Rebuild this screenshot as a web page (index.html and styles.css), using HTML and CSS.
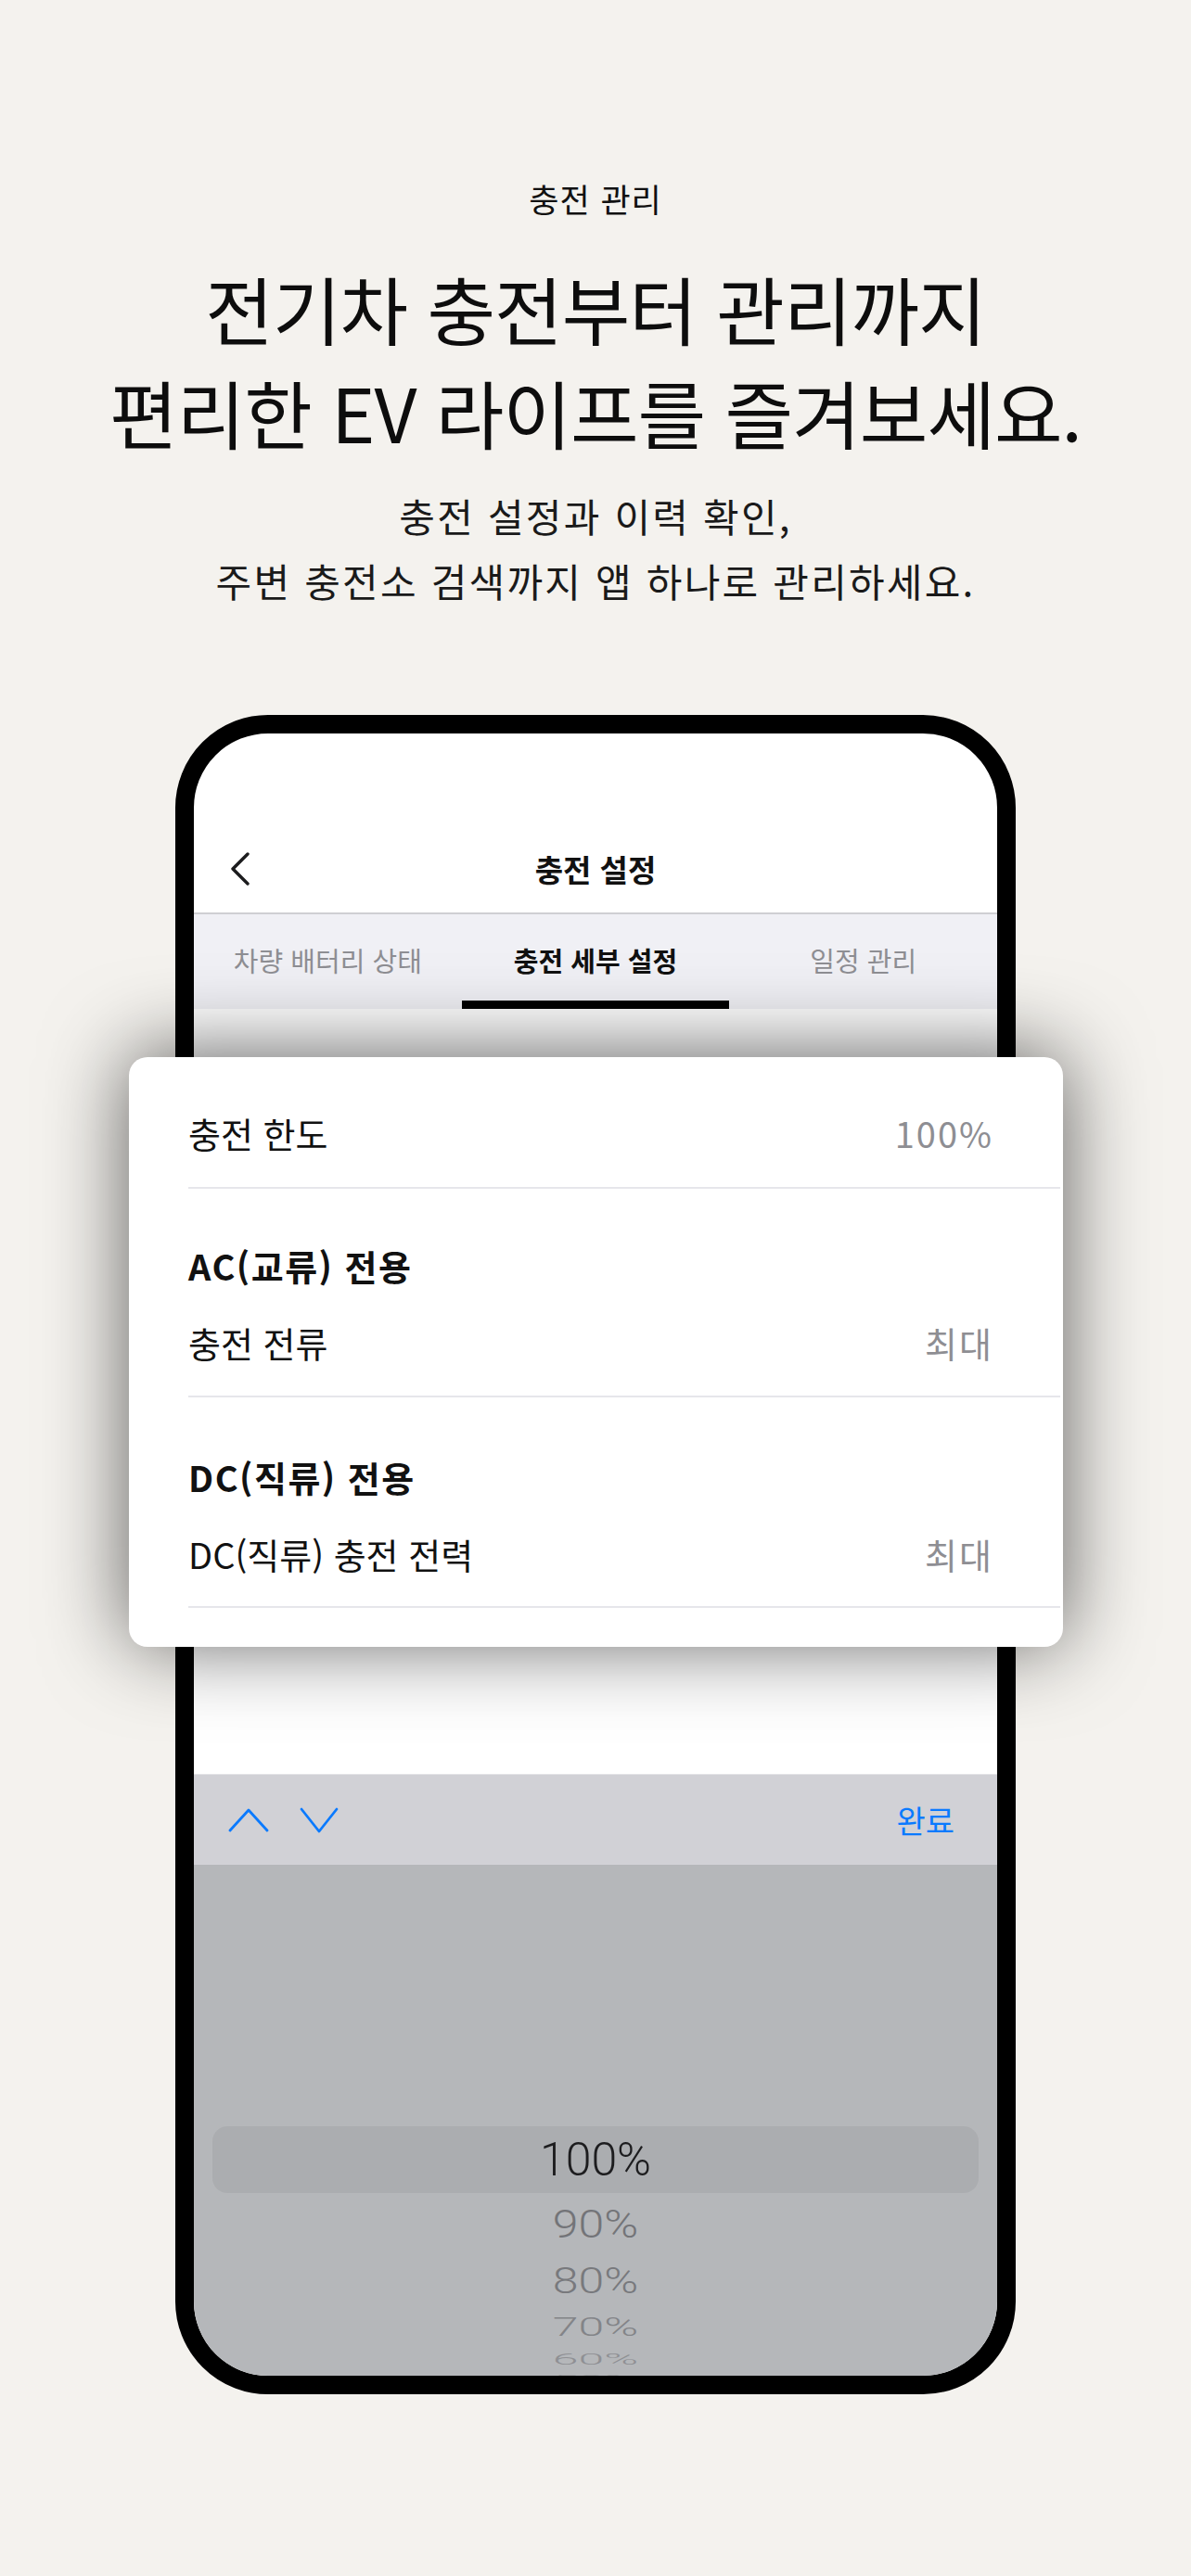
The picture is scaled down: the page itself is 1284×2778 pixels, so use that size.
FILE: index.html
```html
<!DOCTYPE html>
<html lang="ko">
<head>
<meta charset="utf-8">
<title>충전 관리</title>
<link rel="stylesheet" href="styles.css">
</head>
<body>
<div class="page">
  <header class="intro">
    <p class="eyebrow">충전 관리</p>
    <h1 class="headline">전기차 충전부터 관리까지<br>편리한 EV 라이프를 즐겨보세요.</h1>
    <p class="lead">충전 설정과 이력 확인,<br>주변 충전소 검색까지 앱 하나로 관리하세요.</p>
  </header>

  <div class="device-wrap">
    <div class="device">
      <div class="status"></div>
      <div class="navbar">
        <svg class="back" width="24" height="36" viewBox="0 0 24 36"><polyline points="20,2 4,18 20,34" fill="none" stroke="#1c1c1e" stroke-width="3.4" stroke-linecap="round" stroke-linejoin="round"/></svg>
        <span class="nav-title">충전 설정</span>
        <span></span>
      </div>
      <div class="tabs">
        <div class="tab">차량 배터리 상태</div>
        <div class="tab tab-active">충전 세부 설정</div>
        <div class="tab">일정 관리</div>
      </div>
      <div class="content"></div>
      <div class="toolbar">
        <svg class="chev" width="44" height="26" viewBox="0 0 44 26"><polyline points="2,24 22,2 42,24" fill="none" stroke="#0a7aff" stroke-width="2.8" stroke-linecap="round" stroke-linejoin="round"/></svg>
        <svg class="chev chev-down" width="42" height="28" viewBox="0 0 42 28"><polyline points="2,2 21,26 40,2" fill="none" stroke="#0a7aff" stroke-width="2.8" stroke-linecap="round" stroke-linejoin="round"/></svg>
        <span class="done">완료</span>
      </div>
      <div class="picker">
        <div class="pick-band"><span class="pick-sel">100%</span></div>
        <div class="pick-row r1"><span>90%</span></div>
        <div class="pick-row r2"><span>80%</span></div>
        <div class="pick-row r3"><span>70%</span></div>
        <div class="pick-row r4"><span>60%</span></div>
        <div class="pick-row r5"><span>50%</span></div>
      </div>
    </div>

    <div class="sheet">
      <section class="group g1">
        <div class="row"><span class="label">충전 한도</span><span class="value">100%</span></div>
      </section>
      <section class="group g2">
        <div class="group-title">AC(교류) 전용</div>
        <div class="row"><span class="label">충전 전류</span><span class="value">최대</span></div>
      </section>
      <section class="group g3">
        <div class="group-title">DC(직류) 전용</div>
        <div class="row"><span class="label">DC(직류) 충전 전력</span><span class="value">최대</span></div>
      </section>
    </div>
  </div>
</div>
</body>
</html>
```

FILE: styles.css
```css
* { box-sizing: border-box; }

html, body {
  margin: 0;
  padding: 0;
}

body {
  background: #f4f2ee;
  font-family: "Noto Sans CJK KR", "Noto Sans", sans-serif;
  color: #111;
}

.page {
  width: 1284px;
  min-height: 2778px;
  overflow: hidden;
}

.intro {
  padding-top: 194px;
  text-align: center;
}

.eyebrow {
  margin: 0;
  font-size: 35px;
  line-height: 40px;
  font-weight: 400;
  letter-spacing: 1px;
  color: #111;
}

.headline {
  margin: 41px 0 0;
  font-size: 80px;
  line-height: 112px;
  font-weight: 400;
  letter-spacing: -1px;
  color: #0d0d0d;
}

.lead {
  margin: 22px 0 0;
  font-size: 42px;
  line-height: 70px;
  font-weight: 400;
  letter-spacing: 2.2px;
  color: #1a1a1a;
}

/* device */
.device-wrap {
  position: relative;
  width: 906px;
  margin: 110px auto 0;
}

.device {
  width: 906px;
  height: 1811px;
  border: 20px solid #000;
  border-radius: 100px;
  overflow: hidden;
  background: #fff;
  display: flex;
  flex-direction: column;
}

.status {
  height: 98px;
  flex: none;
}

.navbar {
  height: 97px;
  flex: none;
  border-bottom: 2px solid #cfcfd3;
  display: grid;
  grid-template-columns: 1fr auto 1fr;
  align-items: center;
}

.back {
  margin-left: 38px;
}

.nav-title {
  font-size: 33px;
  font-weight: 700;
  letter-spacing: 0;
  color: #111;
}

.tabs {
  height: 102px;
  flex: none;
  background: #f0f0f5;
  display: grid;
  grid-template-columns: repeat(3, 1fr);
}

.tab {
  display: flex;
  align-items: center;
  justify-content: center;
  padding-top: 5px;
  border-bottom: 9px solid transparent;
  font-size: 29px;
  letter-spacing: 0;
  color: #8e8e93;
}

.tab-active {
  color: #111;
  font-weight: 700;
  border-bottom-color: #000;
}

.content {
  height: 825px;
  flex: none;
  background: #fff;
}

.toolbar {
  height: 98px;
  flex: none;
  background: #d1d1d6;
  border-top: 1px solid #e2e2e6;
  display: flex;
  align-items: center;
  padding: 0 46px 0 37px;
}

.chev-down {
  margin-left: 33px;
}

.done {
  margin-left: auto;
  font-size: 34px;
  color: #0a7aff;
  letter-spacing: 0;
}

.picker {
  flex: 1;
  background: #b5b7ba;
  padding-top: 282px;
  font-family: Roboto, "Liberation Sans", sans-serif;
  font-size: 50px;
  font-weight: 300;
  text-align: center;
}

.pick-band {
  height: 72px;
  margin: 0 20px;
  border-radius: 16px;
  background: rgba(0, 0, 0, 0.05);
  display: flex;
  align-items: center;
  justify-content: center;
}

.pick-sel {
  color: #1d1d1f;
  font-weight: 300;
}

.pick-row {
  display: flex;
  align-items: center;
  justify-content: center;
  overflow: visible;
}

.pick-row span {
  display: inline-block;
  line-height: 1;
}

.r1 { height: 66px; color: #737478; }
.r1 span { transform: scaleY(0.86); }
.r2 { height: 58px; color: #78797d; }
.r2 span { transform: scaleY(0.76); }
.r3 { height: 42px; color: #838488; }
.r3 span { transform: scaleY(0.55); }
.r4 { height: 26px; color: #8f9094; }
.r4 span { transform: scaleY(0.34); }
.r5 { height: 18px; color: #9ea0a3; }
.r5 span { transform: scaleY(0.2); }

/* floating settings sheet */
.sheet {
  position: absolute;
  left: -50px;
  top: 369px;
  width: 1007px;
  height: 636px;
  background: #fff;
  border-radius: 20px;
  box-shadow: 0 -4px 90px rgba(0, 0, 0, 0.62);
  padding-left: 64px;
}

.group {
  margin-right: 3px;
  border-bottom: 2px solid #e6e6eb;
}

.g1 { padding: 54px 0 30px; }
.g2 { padding: 55px 0 29px; }
.g3 { padding: 58px 0 28px; }

.group-title {
  font-size: 38px;
  line-height: 56px;
  font-weight: 700;
  letter-spacing: 1.5px;
  color: #111;
}

.row {
  display: flex;
  justify-content: space-between;
  align-items: center;
  padding-right: 72px;
  font-size: 38px;
  line-height: 56px;
  letter-spacing: 0;
}

.group-title + .row {
  margin-top: 27px;
}

.label {
  color: #111;
}

.value {
  color: #8e8e93;
  letter-spacing: 2px;
}
```
